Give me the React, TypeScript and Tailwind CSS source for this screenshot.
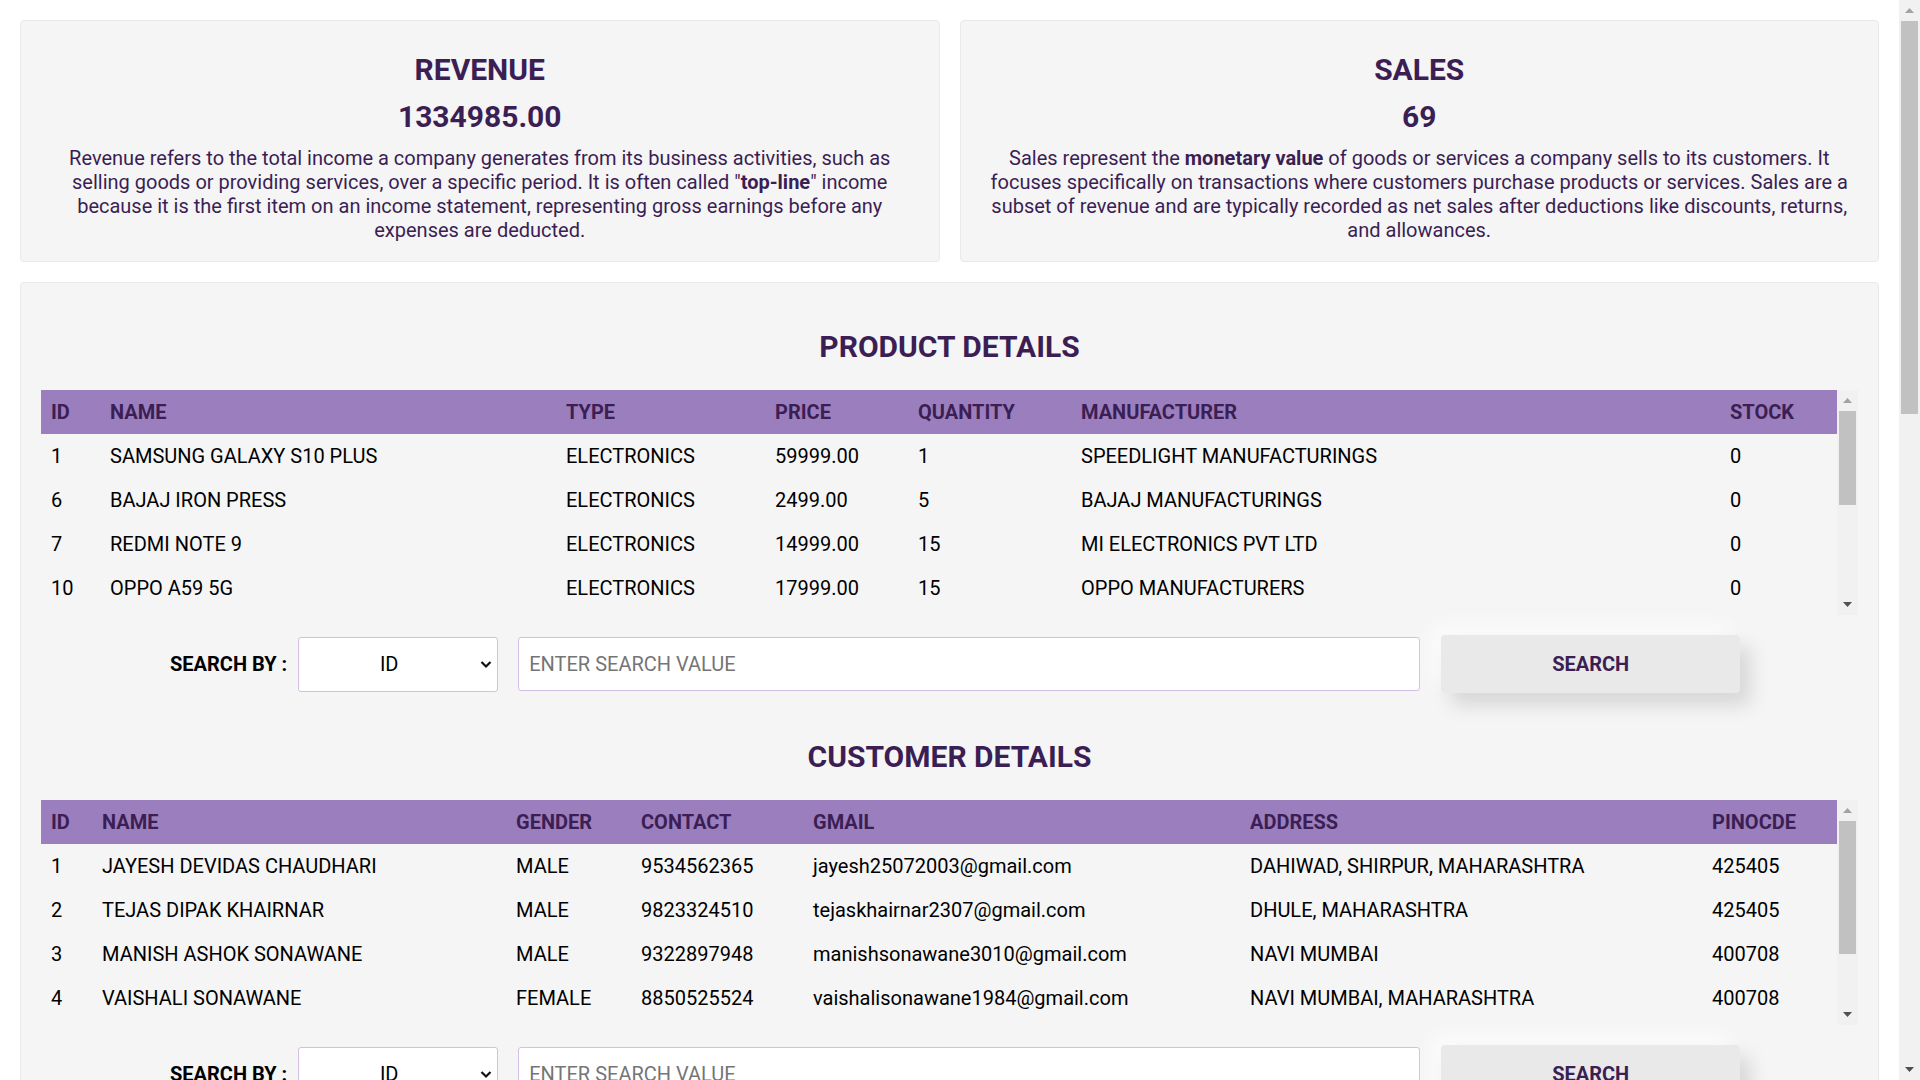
import React from "react";

const products = [
  ["1", "SAMSUNG GALAXY S10 PLUS", "ELECTRONICS", "59999.00", "1", "SPEEDLIGHT MANUFACTURINGS", "0"],
  ["6", "BAJAJ IRON PRESS", "ELECTRONICS", "2499.00", "5", "BAJAJ MANUFACTURINGS", "0"],
  ["7", "REDMI NOTE 9", "ELECTRONICS", "14999.00", "15", "MI ELECTRONICS PVT LTD", "0"],
  ["10", "OPPO A59 5G", "ELECTRONICS", "17999.00", "15", "OPPO MANUFACTURERS", "0"],
];

const customers = [
  ["1", "JAYESH DEVIDAS CHAUDHARI", "MALE", "9534562365", "jayesh25072003@gmail.com", "DAHIWAD, SHIRPUR, MAHARASHTRA", "425405"],
  ["2", "TEJAS DIPAK KHAIRNAR", "MALE", "9823324510", "tejaskhairnar2307@gmail.com", "DHULE, MAHARASHTRA", "425405"],
  ["3", "MANISH ASHOK SONAWANE", "MALE", "9322897948", "manishsonawane3010@gmail.com", "NAVI MUMBAI", "400708"],
  ["4", "VAISHALI SONAWANE", "FEMALE", "8850525524", "vaishalisonawane1984@gmail.com", "NAVI MUMBAI, MAHARASHTRA", "400708"],
];

function UpArrow({ color }: { color: string }) {
  return (
    <svg width="9" height="5" viewBox="0 0 9 5">
      <path d="M0 5 L4.5 0 L9 5 Z" fill={color} />
    </svg>
  );
}

function DownArrow({ color }: { color: string }) {
  return (
    <svg width="9" height="5" viewBox="0 0 9 5">
      <path d="M0 0 L9 0 L4.5 5 Z" fill={color} />
    </svg>
  );
}

function FakeScrollbar({ thumbHeight }: { thumbHeight: number }) {
  return (
    <div className="w-[21px] shrink-0 h-full bg-[#f1f1f1] flex flex-col items-center">
      <div className="h-[21px] w-full flex items-center justify-center">
        <UpArrow color="#a3a3a3" />
      </div>
      <div className="w-[17px] bg-[#c1c1c1]" style={{ height: thumbHeight }} />
      <div className="flex-1" />
      <div className="h-[21px] w-full flex items-center justify-center">
        <DownArrow color="#505050" />
      </div>
    </div>
  );
}

function StatCard({ title, value, children }: { title: string; value: string; children: React.ReactNode }) {
  return (
    <div className="bg-[#f5f5f5] border border-[#e9e9e9] rounded-[4px] px-5 pt-5 pb-[19px] text-center text-[#3B1E54]">
      <h2 className="mt-[11px] text-[30px] leading-[35px] font-bold">{title}</h2>
      <div className="mt-[12px] text-[30px] leading-[35px] font-bold">{value}</div>
      <p className="mt-[12px] text-[20px] leading-[24px]">{children}</p>
    </div>
  );
}

function SearchRow() {
  return (
    <div className="flex items-center mt-5 pl-[129px]">
      <span className="text-[20px] font-bold text-black whitespace-nowrap">SEARCH BY :</span>
      <div className="relative ml-[11px] w-[200px] h-[55px]">
        <select className="appearance-none w-full h-full bg-white border border-[#D4BEE4] rounded-[3px] pr-[18px] text-[20px] text-black text-center [text-align-last:center] outline-none">
          <option>ID</option>
        </select>
        <svg className="absolute right-[6px] top-[23px] pointer-events-none" width="12" height="9" viewBox="0 0 12 9">
          <path d="M1.5 2 L6 6.5 L10.5 2" fill="none" stroke="#111" strokeWidth="2.2" />
        </svg>
      </div>
      <input
        className="ml-[20px] w-[902px] h-[54px] bg-white border border-[#D4BEE4] rounded-[3px] px-[10px] text-[20px] placeholder:text-[#757575] outline-none"
        placeholder="ENTER SEARCH VALUE"
      />
      <button className="ml-[21px] w-[299px] h-[58px] bg-[#e9e9e9] rounded-[4px] text-[20px] font-bold text-[#3B1E54] shadow-[10px_12px_20px_rgba(0,0,0,0.13),-10px_-10px_20px_rgba(255,255,255,0.7)]">
        SEARCH
      </button>
    </div>
  );
}

function DataTable({
  headers,
  widths,
  rows,
  thumb,
}: {
  headers: string[];
  widths: string[];
  rows: string[][];
  thumb: number;
}) {
  return (
    <div className="flex h-[225px]">
      <div className="flex-1 overflow-y-auto [scrollbar-width:none]">
        <table className="w-full table-fixed border-collapse text-[20px]">
          <thead>
            <tr>
              {headers.map((h, i) => (
                <th
                  key={h}
                  className={`sticky top-0 bg-[#9B7EBD] h-[44px] px-[10px] text-left font-bold text-[#3B1E54] ${widths[i]}`}
                >
                  {h}
                </th>
              ))}
            </tr>
          </thead>
          <tbody>
            {rows.map((r) => (
              <tr key={r[0]}>
                {r.map((c, i) => (
                  <td key={i} className="h-[44px] px-[10px] text-left text-black whitespace-nowrap overflow-hidden">
                    {c}
                  </td>
                ))}
              </tr>
            ))}
          </tbody>
        </table>
      </div>
      <FakeScrollbar thumbHeight={thumb} />
    </div>
  );
}

export default function App() {
  return (
    <div className="flex h-screen overflow-hidden bg-white font-['Roboto',sans-serif]">
      <main className="flex-1 overflow-y-auto [scrollbar-width:none] p-5">
        <div className="grid grid-cols-2 gap-5">
          <StatCard title="REVENUE" value="1334985.00">
            Revenue refers to the total income a company generates from its business activities, such as selling goods
            or providing services, over a specific period. It is often called "<b>top-line</b>" income because it is the
            first item on an income statement, representing gross earnings before any expenses are deducted.
          </StatCard>
          <StatCard title="SALES" value="69">
            Sales represent the <b>monetary value</b> of goods or services a company sells to its customers. It focuses
            specifically on transactions where customers purchase products or services. Sales are a subset of revenue
            and are typically recorded as net sales after deductions like discounts, returns, and allowances.
          </StatCard>
        </div>

        <div className="mt-5 bg-[#f5f5f5] border border-[#e9e9e9] rounded-[4px] p-5">
          <h2 className="mt-[26px] mb-[26px] text-center text-[30px] leading-[35px] font-bold text-[#3B1E54]">
            PRODUCT DETAILS
          </h2>
          <DataTable
            headers={["ID", "NAME", "TYPE", "PRICE", "QUANTITY", "MANUFACTURER", "STOCK"]}
            widths={["w-[59px]", "w-[456px]", "w-[209px]", "w-[143px]", "w-[163px]", "w-[649px]", ""]}
            rows={products}
            thumb={94}
          />
          <SearchRow />

          <h2 className="mt-[46px] mb-[26px] text-center text-[30px] leading-[35px] font-bold text-[#3B1E54]">
            CUSTOMER DETAILS
          </h2>
          <DataTable
            headers={["ID", "NAME", "GENDER", "CONTACT", "GMAIL", "ADDRESS", "PINOCDE"]}
            widths={["w-[51px]", "w-[414px]", "w-[125px]", "w-[172px]", "w-[437px]", "w-[462px]", ""]}
            rows={customers}
            thumb={133}
          />
          <SearchRow />
          <div className="h-[40px]" />
        </div>
      </main>
      <div className="w-[21px] shrink-0 h-screen bg-[#f1f1f1] flex flex-col items-center">
        <div className="h-[21px] w-full flex items-center justify-center">
          <UpArrow color="#a3a3a3" />
        </div>
        <div className="w-[17px] h-[393px] bg-[#c1c1c1]" />
        <div className="flex-1" />
        <div className="h-[21px] w-full flex items-center justify-center">
          <DownArrow color="#505050" />
        </div>
      </div>
    </div>
  );
}
